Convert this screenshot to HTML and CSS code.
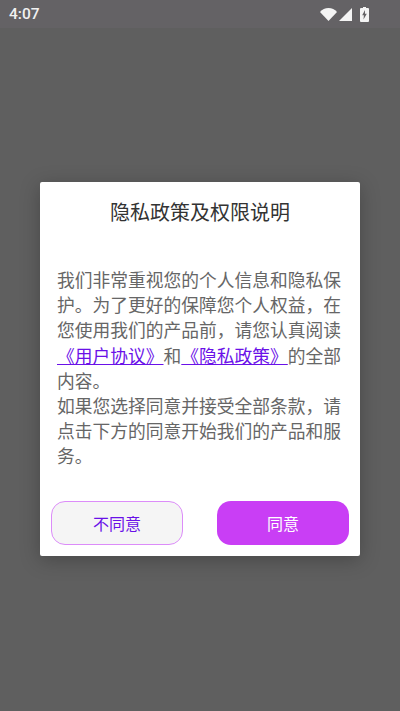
FILE: index.html
```html
<!DOCTYPE html>
<html lang="zh-CN">
<head>
    <meta charset="UTF-8">
    <meta name="viewport" content="width=device-width, initial-scale=1.0">
    <title>隐私政策及权限说明</title>
    <link rel="stylesheet" href="styles.css">
</head>
<body>
    <div class="status-bar">
        <span class="time">4:07</span>
        <div class="status-icons">
            <svg class="icon-wifi" viewBox="0 0 17 13"><path d="M0 3.9C2.2 1.5 5.2 0 8.5 0s6.3 1.5 8.5 3.9L8.5 13z"/></svg>
            <svg class="icon-signal" viewBox="0 0 13 13"><path d="M13 0v13H0z"/></svg>
            <svg class="icon-battery" viewBox="0 0 9 15"><path d="M3 0h3v1h2a1 1 0 0 1 1 1v12a1 1 0 0 1-1 1H1a1 1 0 0 1-1-1V2a1 1 0 0 1 1-1h2z"/><path class="bolt" d="M5 3 2.2 8.2h1.7L3.5 12.5 6.8 6.8H5z"/></svg>
        </div>
    </div>
    <main class="overlay">
        <div class="dialog">
            <h1 class="dialog-title">隐私政策及权限说明</h1>
            <p class="dialog-text">我们非常重视您的个人信息和隐私保护。为了更好的保障您个人权益，在您使用我们的产品前，请您认真阅读<a href="#">《用户协议》</a>和<a href="#">《隐私政策》</a>的全部内容。<br>如果您选择同意并接受全部条款，请点击下方的同意开始我们的产品和服务。</p>
            <div class="dialog-buttons">
                <button class="btn btn-cancel">不同意</button>
                <button class="btn btn-ok">同意</button>
            </div>
        </div>
    </main>
</body>
</html>
```

FILE: styles.css
```css
*, ::before, ::after {
    margin: 0;
    padding: 0;
    box-sizing: border-box;
}

body {
    width: 400px;
    height: 711px;
    overflow: hidden;
    background-color: #5f5f5f;
    font-family: "Noto Sans CJK SC", "Noto Sans", sans-serif;
    display: flex;
    flex-direction: column;
}

.status-bar {
    height: 28px;
    padding: 0 31px 0 9px;
    background-color: #646265;
    color: #f1f1f1;
    display: flex;
    justify-content: space-between;
    align-items: center;
}

.time {
    font-family: Roboto, sans-serif;
    font-size: 15.5px;
    font-weight: 500;
}

.status-icons {
    display: flex;
    align-items: center;
    gap: 2px;
}

.status-icons svg {
    fill: #f4f4f4;
    display: block;
}

.icon-wifi {
    width: 17px;
    height: 13px;
}

.icon-signal {
    width: 13px;
    height: 13px;
}

.icon-battery {
    width: 9px;
    height: 15px;
    margin-left: 6px;
}

.status-icons .bolt {
    fill: #646265;
}

.overlay {
    padding-top: 154px;
    display: flex;
    justify-content: center;
}

.dialog {
    width: 320px;
    height: 374px;
    padding: 0 11px 11px;
    background-color: #fff;
    border-radius: 2px;
    box-shadow: 0 4px 20px rgba(0, 0, 0, 0.25);
    display: flex;
    flex-direction: column;
}

.dialog-title {
    margin-top: 14px;
    font-size: 20px;
    font-weight: 400;
    line-height: 32px;
    text-align: center;
    color: #333;
}

.dialog-text {
    margin-top: 39px;
    padding: 0 6px;
    font-size: 17.75px;
    line-height: 25.2px;
    color: #666;
}

.dialog-text a {
    color: #6a11e8;
    text-decoration: underline;
}

.dialog-buttons {
    margin-top: auto;
    display: flex;
    justify-content: space-between;
}

.btn {
    width: 132px;
    height: 44px;
    border-radius: 14px;
    font-family: inherit;
    font-size: 16px;
}

.btn-cancel {
    background-color: #f5f5f5;
    border: 1px solid #dc8cf9;
    color: #6a11e8;
}

.btn-ok {
    background-color: #c93ef5;
    border: none;
    color: #fff;
}
```
